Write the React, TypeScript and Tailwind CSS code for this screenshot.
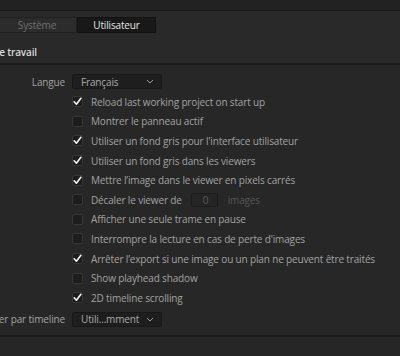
import React from 'react';

const rows: { label: string; checked: boolean; offset?: boolean }[] = [
  { label: 'Reload last working project on start up', checked: true },
  { label: 'Montrer le panneau actif', checked: false },
  { label: "Utiliser un fond gris pour l'interface utilisateur", checked: true },
  { label: 'Utiliser un fond gris dans les viewers', checked: true },
  { label: 'Mettre l’image dans le viewer en pixels carrés', checked: true },
  { label: 'Décaler le viewer de', checked: false, offset: true },
  { label: 'Afficher une seule trame en pause', checked: false },
  { label: "Interrompre la lecture en cas de perte d'images", checked: false },
  { label: 'Arrêter l’export si une image ou un plan ne peuvent être traités', checked: true },
  { label: 'Show playhead shadow', checked: false },
  { label: '2D timeline scrolling', checked: true },
];

function Check({ on }: { on: boolean }) {
  return (
    <span className="flex h-[11px] w-[11px] shrink-0 items-center justify-center rounded-[2px] border border-[#363636] bg-[#1d1d1d]">
      {on && (
        <svg width="9" height="9" viewBox="0 0 9 9" fill="none">
          <path d="M1.2 4.8 L3.4 7.2 L7.9 1.3" stroke="#f2f2f2" strokeWidth="1.6" strokeLinecap="round" strokeLinejoin="round" />
        </svg>
      )}
    </span>
  );
}

function Select({ value }: { value: string }) {
  return (
    <div className="flex h-[15px] w-[90px] items-center justify-between rounded-[2px] border border-[#181818] bg-[#1e1e1e] pl-[8px] pr-[7px] text-[#a9a9a9]">
      <span>{value}</span>
      <svg width="8" height="5" viewBox="0 0 8 5" fill="none">
        <path d="M1 1 L4 4 L7 1" stroke="#9a9a9a" strokeWidth="1" />
      </svg>
    </div>
  );
}

export default function App() {
  return (
    <div
      className="flex h-[356px] w-[400px] flex-col overflow-hidden bg-[#262626] text-[10px] leading-none tracking-[-0.15px] text-[#a2a2a2]"
      style={{ fontFamily: '"Open Sans", "Noto Sans", sans-serif' }}
    >
      <div className="h-[10px] bg-[#222222]" />
      <div className="h-px bg-[#1a1a1a]" />
      <div className="flex h-[52px] flex-col bg-[#292929]">
        <div className="ml-[-3px] mt-[6px] flex h-[16px]">
          <div className="flex w-[80px] items-center justify-center border border-[#1f1f1f] bg-[#2c2c2c] text-[#707070]">
            Système
          </div>
          <div className="flex w-[79px] items-center justify-center border border-[#131313] bg-[#181818] text-[#e6e6e6]">
            Utilisateur
          </div>
        </div>
        <div className="mt-[14px] flex w-[37px] justify-end whitespace-nowrap font-semibold text-[#dadada]">
          Espace de travail
        </div>
      </div>
      <div className="h-[2px] bg-[#1b1b1b]" />
      <div className="flex flex-col bg-[#272727] pt-[9px]">
        <div className="flex h-[15px] items-center">
          <div className="flex w-[65px] justify-end whitespace-nowrap">Langue</div>
          <div className="ml-[7px]">
            <Select value="Français" />
          </div>
        </div>
        <div className="mt-[3px] flex flex-col">
          {rows.map((r) => (
            <div key={r.label} className="flex h-[19.6px] items-center pl-[72px]">
              <Check on={r.checked} />
              <span className="ml-[8px] whitespace-nowrap">{r.label}</span>
              {r.offset && (
                <>
                  <span className="ml-[9px] flex h-[14px] w-[27px] items-center rounded-[2px] border border-[#1c1c1c] bg-[#242424] pl-[11px] text-[#5a5a5a]">
                    0
                  </span>
                  <span className="ml-[10px] text-[#555555]">images</span>
                </>
              )}
            </div>
          ))}
        </div>
        <div className="mt-[4px] flex h-[15px] items-center">
          <div className="flex w-[65px] justify-end whitespace-nowrap">Trier par timeline</div>
          <div className="ml-[7px]">
            <Select value="Utili...mment" />
          </div>
        </div>
        <div className="h-[8px]" />
      </div>
      <div className="h-[2px] bg-[#1c1c1c]" />
      <div className="flex-1 bg-[#262626]" />
    </div>
  );
}
